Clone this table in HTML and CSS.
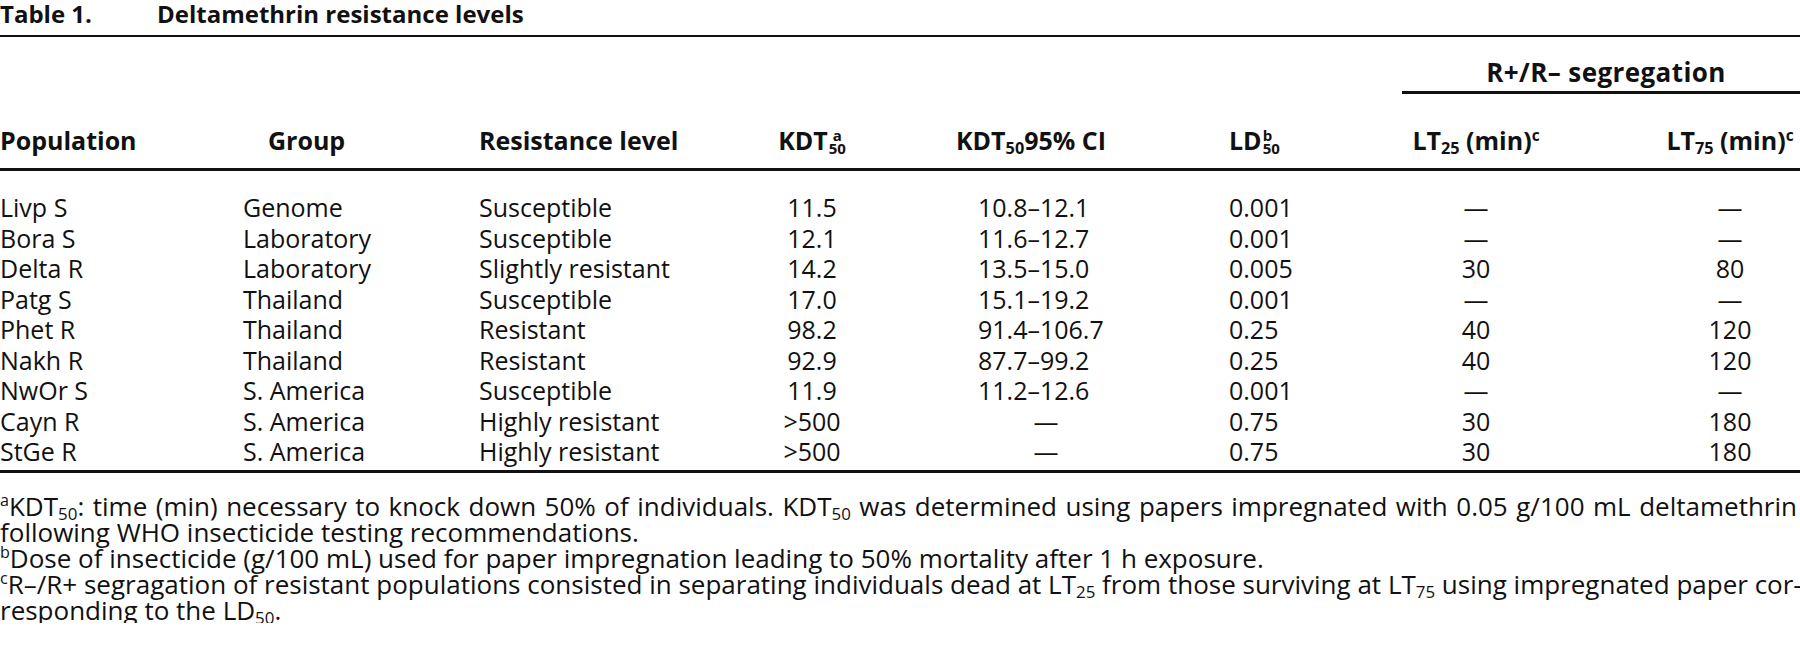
FILE: index.html
```html
<!DOCTYPE html>
<html lang="en">
<head>
<meta charset="utf-8">
<title>Table 1. Deltamethrin resistance levels</title>
<link rel="stylesheet" href="styles.css">
</head>
<body>
<div class="caption"><span class="num">Table 1.</span>Deltamethrin resistance levels</div>
<div class="tbl">
  <div class="thead">
    <div class="h span col1">Population</div>
    <div class="h span col2">Group</div>
    <div class="h span col3">Resistance level</div>
    <div class="h span col4">KDT<span class="ss"><span>a</span><span>50</span></span></div>
    <div class="h span col5">KDT<sub>50</sub>95% CI</div>
    <div class="h span col6">LD<span class="ss"><span>b</span><span>50</span></span></div>
    <div class="h seg">R+/R– segregation</div>
    <div class="h lt col7">LT<sub>25</sub> (min)<sup>c</sup></div>
    <div class="h lt col8">LT<sub>75</sub> (min)<sup>c</sup></div>
  </div>
  <div class="tbody">
    <div>Livp S</div><div>Genome</div><div>Susceptible</div><div>11.5</div><div>10.8–12.1</div><div>0.001</div><div>—</div><div>—</div>
    <div>Bora S</div><div>Laboratory</div><div>Susceptible</div><div>12.1</div><div>11.6–12.7</div><div>0.001</div><div>—</div><div>—</div>
    <div>Delta R</div><div>Laboratory</div><div>Slightly resistant</div><div>14.2</div><div>13.5–15.0</div><div>0.005</div><div>30</div><div>80</div>
    <div>Patg S</div><div>Thailand</div><div>Susceptible</div><div>17.0</div><div>15.1–19.2</div><div>0.001</div><div>—</div><div>—</div>
    <div>Phet R</div><div>Thailand</div><div>Resistant</div><div>98.2</div><div>91.4–106.7</div><div>0.25</div><div>40</div><div>120</div>
    <div>Nakh R</div><div>Thailand</div><div>Resistant</div><div>92.9</div><div>87.7–99.2</div><div>0.25</div><div>40</div><div>120</div>
    <div>NwOr S</div><div>S. America</div><div>Susceptible</div><div>11.9</div><div>11.2–12.6</div><div>0.001</div><div>—</div><div>—</div>
    <div>Cayn R</div><div>S. America</div><div>Highly resistant</div><div>&gt;500</div><div class="dash">—</div><div>0.75</div><div>30</div><div>180</div>
    <div>StGe R</div><div>S. America</div><div>Highly resistant</div><div>&gt;500</div><div class="dash">—</div><div>0.75</div><div>30</div><div>180</div>
  </div>
</div>
<div class="notes">
  <p class="just"><sup>a</sup>KDT<sub>50</sub>: time (min) necessary to knock down 50% of individuals. KDT<sub>50</sub> was determined using papers impregnated with 0.05 g/100 mL deltamethrin</p>
  <p>following WHO insecticide testing recommendations.</p>
  <p><sup>b</sup>Dose of insecticide (g/100 mL) used for paper impregnation leading to 50% mortality after 1 h exposure.</p>
  <p class="just"><sup>c</sup>R–/R+ segragation of resistant populations consisted in separating individuals dead at LT<sub>25</sub> from those surviving at LT<sub>75</sub> using impregnated paper cor-</p>
  <p>responding to the LD<sub>50</sub>.</p>
</div>
</body>
</html>
```

FILE: styles.css
```css
html, body {
  margin: 0;
  padding: 0;
  background: #ffffff;
}

body {
  width: 1800px;
  overflow: hidden;
  color: #111111;
  font-family: "Open Sans", "Noto Sans", sans-serif;
}

.caption {
  font-weight: 700;
  font-size: 24px;
  line-height: 28px;
  height: 35px;
  white-space: nowrap;
}

.caption .num {
  display: inline-block;
  width: 157px;
}

.thead,
.tbody {
  display: grid;
  grid-template-columns: 243px 236px 261px 152px 308px 202px 148px 250px;
}

.thead {
  border-top: 2px solid #111;
  border-bottom: 3px solid #111;
}

.h {
  font-weight: 700;
  font-size: 25px;
  line-height: 30px;
  white-space: nowrap;
}

.h.span {
  grid-row: 1 / span 2;
  align-self: end;
  padding-bottom: 13px;
}

.col1 { grid-column: 1; }
.col2 { grid-column: 2; padding-left: 25px; }
.col3 { grid-column: 3; }
.col4 { grid-column: 4; text-align: center; padding-right: 8px; }
.col5 { grid-column: 5; padding-left: 64px; }
.col6 { grid-column: 6; padding-left: 29px; }
.col7 { grid-column: 7; }
.col8 { grid-column: 8; padding-left: 110px; }

.h.seg {
  grid-column: 7 / span 2;
  grid-row: 1;
  text-align: center;
  font-size: 26px;
  letter-spacing: 0.4px;
  padding: 20px 0 4px 10px;
  border-bottom: 3px solid #111;
}

.h.lt {
  grid-row: 2;
  text-align: center;
  padding-top: 31px;
  padding-bottom: 13px;
}

.ss {
  display: inline-flex;
  flex-direction: column;
  font-size: 15px;
  line-height: 13px;
  vertical-align: 9px;
  margin-left: 1px;
}

sub {
  font-size: 0.65em;
  line-height: 0;
  vertical-align: -0.25em;
}

sup {
  font-size: 0.62em;
  line-height: 0;
  vertical-align: 0.55em;
}

.tbody {
  grid-auto-rows: 30.5px;
  padding: 21px 0 3px;
  border-bottom: 3px solid #111;
  font-size: 25px;
  line-height: 30.5px;
  white-space: nowrap;
}

.tbody > :nth-child(8n+4) { text-align: center; padding-right: 8px; }
.tbody > :nth-child(8n+5) { padding-left: 86px; }
.tbody > .dash { padding-left: 0; text-align: center; }
.tbody > :nth-child(8n+6) { padding-left: 29px; }
.tbody > :nth-child(8n+7) { text-align: center; }
.tbody > :nth-child(8n) { text-align: center; padding-left: 110px; }

.notes {
  padding-top: 20px;
  font-size: 26px;
  line-height: 26px;
  white-space: nowrap;
}

.notes p {
  margin: 0;
}

.notes p.just {
  width: 1797px;
  text-align: justify;
  text-align-last: justify;
}

.notes sup {
  vertical-align: 0.6em;
}
```
